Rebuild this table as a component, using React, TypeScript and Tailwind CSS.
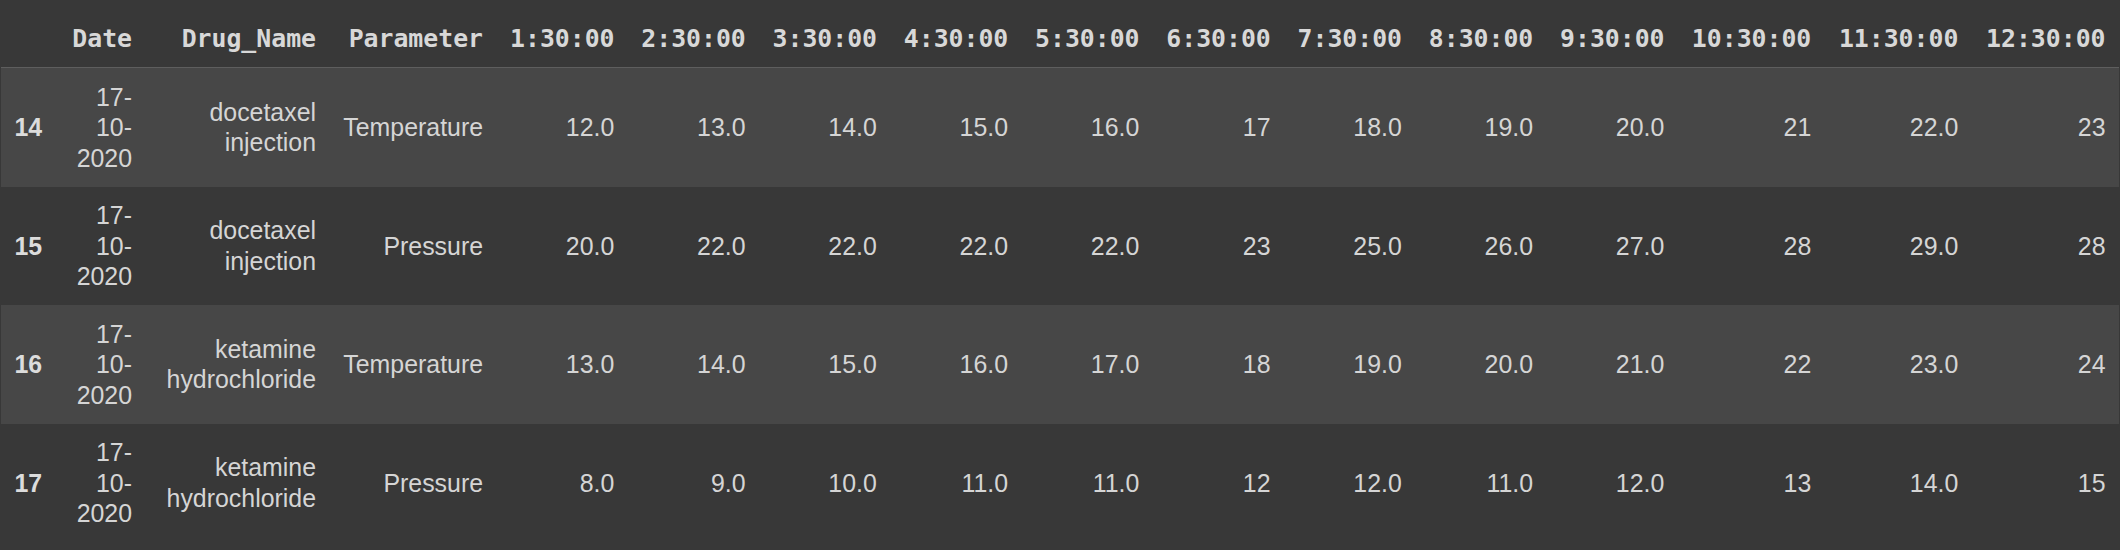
import React from "react";

const timeCols7 = ["1:30:00","2:30:00","3:30:00","4:30:00","5:30:00","6:30:00","7:30:00","8:30:00","9:30:00"];
const timeCols8 = ["10:30:00","11:30:00","12:30:00"];

const rows = [
  { idx: "14", date: "17-10-2020", drug: "docetaxel injection", param: "Temperature", vals: ["12.0","13.0","14.0","15.0","16.0","17","18.0","19.0","20.0","21","22.0","23"] },
  { idx: "15", date: "17-10-2020", drug: "docetaxel injection", param: "Pressure", vals: ["20.0","22.0","22.0","22.0","22.0","23","25.0","26.0","27.0","28","29.0","28"] },
  { idx: "16", date: "17-10-2020", drug: "ketamine hydrochloride", param: "Temperature", vals: ["13.0","14.0","15.0","16.0","17.0","18","19.0","20.0","21.0","22","23.0","24"] },
  { idx: "17", date: "17-10-2020", drug: "ketamine hydrochloride", param: "Pressure", vals: ["8.0","9.0","10.0","11.0","11.0","12","12.0","11.0","12.0","13","14.0","15"] },
];

const thCls = "px-[13.5px] py-[13.5px] text-right align-middle font-bold text-[#d8d8d8] text-[24.8px] leading-[31px] whitespace-nowrap";
const tdCls = "px-[13.5px] py-[13.5px] text-right align-middle text-[#d5d5d5] text-[24.9px] leading-[30.5px]";

export default function App() {
  return (
    <div className="w-[2120px] h-[550px] bg-[#383838] overflow-hidden pt-[9px]">
      <table className="ml-px table-fixed border-collapse w-[2118px]">
        <colgroup>
          <col className="w-[54px]" />
          <col className="w-[90.5px]" />
          <col className="w-[184px]" />
          <col className="w-[167px]" />
          {timeCols7.map((c) => (
            <col key={c} className="w-[131.25px]" />
          ))}
          {timeCols8.map((c) => (
            <col key={c} className="w-[147px]" />
          ))}
        </colgroup>
        <thead className="font-['DejaVu_Sans_Mono','Liberation_Mono',monospace]">
          <tr className="border-b border-[#5e5e5e]">
            <th className={thCls}></th>
            <th className={thCls}>Date</th>
            <th className={thCls}>Drug_Name</th>
            <th className={thCls}>Parameter</th>
            {timeCols7.map((c) => (
              <th key={c} className={thCls}>{c}</th>
            ))}
            {timeCols8.map((c) => (
              <th key={c} className={thCls}>{c}</th>
            ))}
          </tr>
        </thead>
        <tbody className="font-['Liberation_Sans',Arial,sans-serif]">
          {rows.map((r, i) => (
            <tr key={r.idx} className={i % 2 === 0 ? "bg-[#474747]" : "bg-[#383838]"}>
              <th className="px-[13.5px] py-[13.5px] text-left align-middle font-bold text-[#dcdcdc] text-[24.9px] leading-[30.5px]">
                {r.idx}
              </th>
              <td className={tdCls}>{r.date}</td>
              <td className={tdCls}>{r.drug}</td>
              <td className={tdCls}>{r.param}</td>
              {r.vals.map((v, j) => (
                <td key={j} className={tdCls}>{v}</td>
              ))}
            </tr>
          ))}
        </tbody>
      </table>
    </div>
  );
}
